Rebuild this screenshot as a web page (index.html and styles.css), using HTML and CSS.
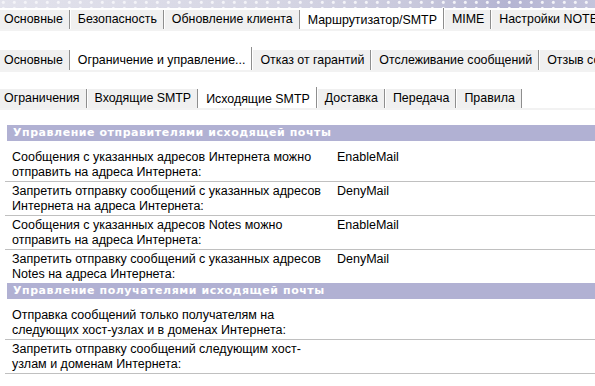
FILE: index.html
```html
<!DOCTYPE html>
<html lang="ru">
<head>
<meta charset="utf-8">
<link rel="stylesheet" href="styles.css">
</head>
<body>
<div class="banner"></div>
<div class="tabbar bar1">
  <div class="tab first">Основные</div>
  <div class="tab">Безопасность</div>
  <div class="tab">Обновление клиента</div>
  <div class="tab active">Маршрутизатор/SMTP</div>
  <div class="tab">MIME</div>
  <div class="tab">Настройки NOTES.INI</div>
</div>
<div class="tabbar bar2">
  <div class="tab first">Основные</div>
  <div class="tab active">Ограничение и управление...</div>
  <div class="tab">Отказ от гарантий</div>
  <div class="tab">Отслеживание сообщений</div>
  <div class="tab">Отзыв сообщений</div>
</div>
<div class="tabbar bar3">
  <div class="tab first">Ограничения</div>
  <div class="tab">Входящие SMTP</div>
  <div class="tab active">Исходящие SMTP</div>
  <div class="tab">Доставка</div>
  <div class="tab">Передача</div>
  <div class="tab">Правила</div>
</div>
<div class="content">
  <div class="section-head">Управление отправителями исходящей почты</div>
  <div class="rows">
    <div class="row"><div class="label">Сообщения с указанных адресов Интернета можно отправить на адреса Интернета:</div><div class="value">EnableMail</div></div>
    <div class="row"><div class="label">Запретить отправку сообщений с указанных адресов Интернета на адреса Интернета:</div><div class="value">DenyMail</div></div>
    <div class="row"><div class="label">Сообщения с указанных адресов Notes можно отправить на адреса Интернета:</div><div class="value">EnableMail</div></div>
    <div class="row last"><div class="label">Запретить отправку сообщений с указанных адресов Notes на адреса Интернета:</div><div class="value">DenyMail</div></div>
  </div>
  <div class="section-head">Управление получателями исходящей почты</div>
  <div class="rows">
    <div class="row"><div class="label">Отправка сообщений только получателям на следующих хост-узлах и в доменах Интернета:</div><div class="value"></div></div>
    <div class="row"><div class="label">Запретить отправку сообщений следующим хост-узлам и доменам Интернета:</div><div class="value"></div></div>
  </div>
</div>
</body>
</html>
```
FILE: styles.css
```css
html, body {
  margin: 0;
  padding: 0;
  background: #fff;
  width: 595px;
  height: 386px;
  overflow: hidden;
  font-family: "Liberation Sans", Arial, sans-serif;
  font-size: 12.5px;
  color: #000;
}

.banner {
  height: 8px;
  background:
    radial-gradient(circle at 30% 40%, #f4f4f8 0 1px, transparent 2px) 0 0 / 11px 6px,
    linear-gradient(to right, #e2e2ec 0%, #d6d6e4 45%, #c8c8dc 70%, #b4b4d2 85%, #c4c4dc 100%);
}

.tabbar {
  display: flex;
  align-items: flex-end;
  border-bottom: 2px solid #f2f2f2;
  white-space: nowrap;
  overflow: hidden;
  font-size: 12.4px;
}
.bar1 { height: 21px; }
.bar2 { height: 23px; margin-top: 16px; }
.bar3 { height: 22px; margin-top: 14px; }

.tab {
  height: 19px;
  line-height: 19px;
  padding: 0 6px 0 7px;
  background: #f0f0f0;
  border-right: 1px solid #8e8e8e;
  box-shadow: 1px 0 0 #fff;
  margin-right: 1px;
  flex: none;
}
.tab.first { padding-left: 4px; }
.bar2 .tab { height: 20px; line-height: 20px; }
.tab.active {
  background: #fff;
  height: 22px;
  line-height: 24px;
  margin-bottom: -2px;
}
.bar1 .tab.active { height: 23px; line-height: 24px; }
.bar2 .tab.active { height: 25px; line-height: 26px; }
.bar3 .tab.active { height: 23px; line-height: 24px; }

.content {
  margin-top: 15px;
  padding-left: 5px;
}

.section-head {
  margin-left: 2px;
  height: 16px;
  line-height: 16px;
  background: #b1b1d3;
  color: #fff;
  font-family: "DejaVu Sans", Verdana, sans-serif;
  font-weight: bold;
  font-size: 11px;
  letter-spacing: 0.55px;
  padding-left: 6px;
  white-space: nowrap;
  overflow: hidden;
}

.rows { padding-top: 7px; }

.row {
  display: grid;
  grid-template-columns: 332px 1fr;
  padding: 2px 0 1px;
  border-bottom: 1px solid #c0c0c0;
  line-height: 15px;
}
.row.last { border-bottom: none; }
.label { padding-left: 7px; padding-right: 8px; }
```
